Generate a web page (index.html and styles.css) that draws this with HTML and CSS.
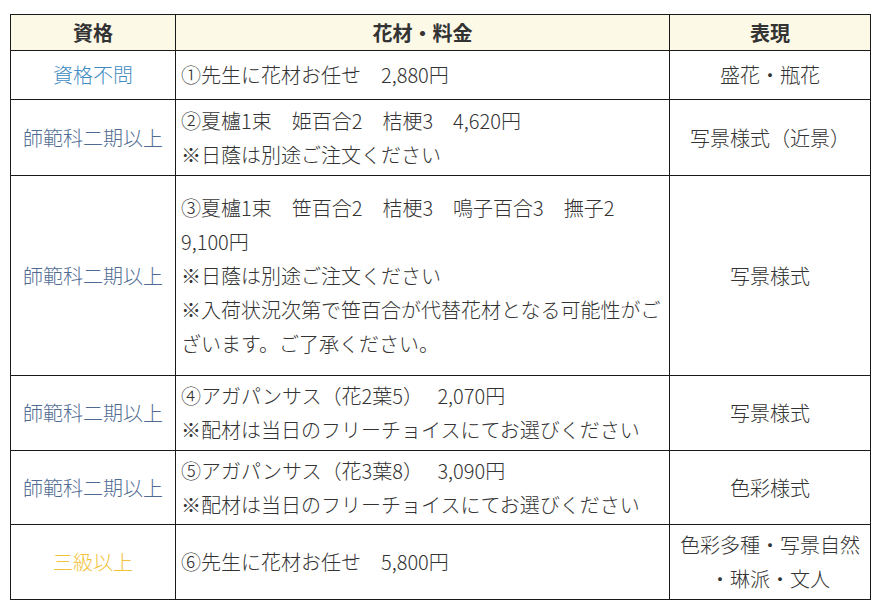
FILE: index.html
```html
<!DOCTYPE html>
<html lang="ja">
<head>
<meta charset="utf-8">
<title>花材・料金</title>
<link rel="stylesheet" href="styles.css">
</head>
<body>
<table class="price-table">
  <colgroup>
    <col class="col-qual">
    <col class="col-item">
    <col class="col-style">
  </colgroup>
  <thead>
    <tr class="row-head">
      <th>資格</th>
      <th>花材・料金</th>
      <th>表現</th>
    </tr>
  </thead>
  <tbody>
    <tr class="row-1">
      <td class="qual qual-any">資格不問</td>
      <td class="item">①先生に花材お任せ　2,880円</td>
      <td class="style">盛花・瓶花</td>
    </tr>
    <tr class="row-2">
      <td class="qual qual-master">師範科二期以上</td>
      <td class="item">②夏櫨1束　姫百合2　桔梗3　4,620円<br>※日蔭は別途ご注文ください</td>
      <td class="style">写景様式（近景）</td>
    </tr>
    <tr class="row-3">
      <td class="qual qual-master">師範科二期以上</td>
      <td class="item">③夏櫨1束　笹百合2　桔梗3　鳴子百合3　撫子2　9,100円<br>※日蔭は別途ご注文ください<br>※入荷状況次第で笹百合が代替花材となる可能性がございます。ご了承ください。</td>
      <td class="style">写景様式</td>
    </tr>
    <tr class="row-4">
      <td class="qual qual-master">師範科二期以上</td>
      <td class="item">④アガパンサス（花2葉5）　 2,070円<br>※配材は当日のフリーチョイスにてお選びください</td>
      <td class="style">写景様式</td>
    </tr>
    <tr class="row-5">
      <td class="qual qual-master">師範科二期以上</td>
      <td class="item">⑤アガパンサス（花3葉8）　 3,090円<br>※配材は当日のフリーチョイスにてお選びください</td>
      <td class="style">色彩様式</td>
    </tr>
    <tr class="row-6">
      <td class="qual qual-third">三級以上</td>
      <td class="item">⑥先生に花材お任せ　5,800円</td>
      <td class="style">色彩多種・写景自然<br>・琳派・文人</td>
    </tr>
  </tbody>
</table>
</body>
</html>
```
FILE: styles.css
```css
html, body {
  margin: 0;
  padding: 0;
  background: #ffffff;
}

body {
  padding: 14px 0 0 10px;
  font-family: "Noto Sans CJK JP", "Noto Sans", sans-serif;
  font-size: 20px;
  font-weight: 300;
  color: #333333;
}

.price-table {
  border-collapse: collapse;
  table-layout: fixed;
  width: 860px;
}

.col-qual { width: 165px; }
.col-item { width: 494px; }
.col-style { width: 201px; }

.price-table th,
.price-table td {
  border: 1px solid #1a1a1a;
  padding: 0 5px;
  line-height: 34px;
  vertical-align: middle;
}

.price-table th {
  background: #fcf9e6;
  font-weight: 700;
  font-size: 20px;
  color: #333333;
  text-align: center;
  height: 35px;
  line-height: 30px;
}

.qual {
  text-align: center;
}
.qual-any { color: #3f8bbf; }
.qual-master { color: #4f6b92; }
.qual-third { color: #f0c23a; }

.item {
  text-align: left;
  word-break: normal;
}

.style {
  text-align: center;
  line-height: 32px;
}

.row-1 td { height: 48px; }
.row-2 td { height: 75px; }
.row-3 td { height: 199px; }
.row-4 td { height: 74px; }
.row-5 td { height: 73px; }
.row-6 td { height: 74px; }
```
